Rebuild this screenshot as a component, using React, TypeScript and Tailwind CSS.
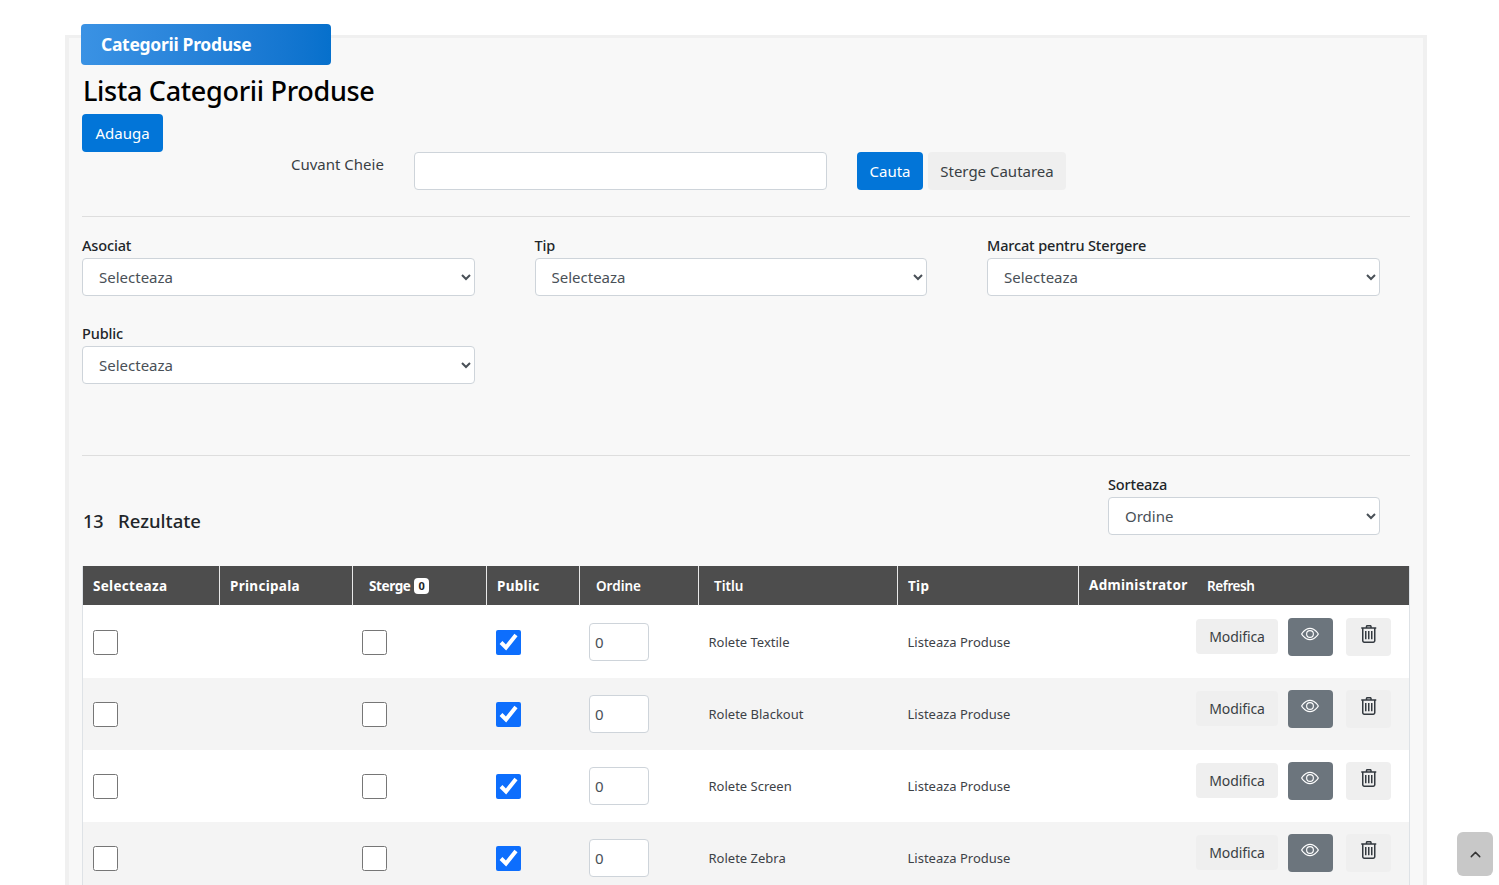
import { ChevronUp } from "lucide-react";
import { BsEye } from "react-icons/bs";
import { LiaTrashAlt } from "react-icons/lia";

const filters = ["Asociat", "Tip", "Marcat pentru Stergere", "Public"];

const rows = ["Rolete Textile", "Rolete Blackout", "Rolete Screen", "Rolete Zebra"];

const selectClass =
  "h-[38px] rounded border border-[#ced4da] bg-white pl-3 text-[15px] text-[#495057]";

const thClass = "border-r border-b border-r-[#e8e8e8] border-b-white pt-[2px]";

const Select = ({ value, width }: { value: string; width: string }) => (
  <select className={`${selectClass} ${width}`} defaultValue={value}>
    <option>{value}</option>
  </select>
);

export default function App() {
  return (
    <div className="relative h-[885px] overflow-hidden bg-white pt-[35px] pl-[65px] pr-[72px] font-['Noto_Sans',sans-serif] text-[#212529]">
      <div className="h-[900px] border-x-[4px] border-t-[3px] border-[#f0f0f0] bg-[#f8f8f8] px-[13px]">
        {/* TITLE TAB */}
        <div className="-mt-[14px] -ml-px flex h-[41px] w-[250px] items-center rounded bg-gradient-to-r from-[#3a92e4] to-[#0670cc] pl-5 text-[17.5px] font-bold tracking-[-0.3px] text-white">
          Categorii Produse
        </div>

        <h2 className="mt-[7px] h-[42px] pl-px text-[27px] leading-[38px] font-medium tracking-[-0.3px] text-black">
          Lista Categorii Produse
        </h2>

        <button className="block h-[38px] w-[81px] rounded bg-[#0275d8] text-[15px] text-white">
          Adauga
        </button>

        {/* SEARCH */}
        <div className="flex items-start pl-[209px]">
          <label className="w-[123px] text-[15px] leading-6 whitespace-nowrap text-[#3a3f44]">
            Cuvant Cheie
          </label>
          <input className="h-[38px] w-[413px] rounded border border-[#ced4da] bg-white" />
          <button className="ml-[30px] h-[38px] w-[66px] rounded bg-[#0275d8] text-[15px] text-white">
            Cauta
          </button>
          <button className="ml-[5px] h-[38px] w-[138px] rounded bg-[#efefef] text-[15px] text-[#3a3f44]">
            Sterge Cautarea
          </button>
        </div>

        <hr className="mt-[26px] border-[#dedede]" />

        {/* FILTERS */}
        <div className="mt-4 grid grid-cols-[452.5px_452.5px_1fr] gap-y-[25px]">
          {filters.map((label) => (
            <div key={label}>
              <div className="mb-px text-[14.5px] leading-6 font-medium tracking-[-0.15px]">
                {label}
              </div>
              <Select value="Selecteaza" width="w-[392.5px]" />
            </div>
          ))}
        </div>

        <hr className="mt-[71px] border-[#dedede]" />

        {/* RESULTS */}
        <div className="mt-4 flex items-end justify-between pr-[30px]">
          <div className="flex pb-[1px] text-[18.5px] leading-[26px] font-medium">
            <span className="w-[36px] pl-px text-[18px]">13</span>
            <span>Rezultate</span>
          </div>
          <div>
            <div className="mb-px text-[14.5px] leading-6 font-medium tracking-[-0.15px]">
              Sorteaza
            </div>
            <Select value="Ordine" width="w-[272px]" />
          </div>
        </div>

        {/* TABLE */}
        <table className="mt-[31px] w-[1328px] table-fixed border-separate border-spacing-0 border-x border-[#dee2e6] text-[13px]">
          <colgroup>
            <col className="w-[137px]" />
            <col className="w-[133px]" />
            <col className="w-[134px]" />
            <col className="w-[93px]" />
            <col className="w-[119px]" />
            <col className="w-[199px]" />
            <col className="w-[181px]" />
            <col />
          </colgroup>
          <thead>
            <tr className="h-[40px] bg-[#4d4d4d] text-left text-[13.5px] font-bold text-white">
              <th className={`${thClass} pl-2.5 tracking-[0.3px]`}>Selecteaza</th>
              <th className={`${thClass} pl-2.5 tracking-[0.3px]`}>Principala</th>
              <th className={`${thClass} pl-4`}>
                <span className="tracking-[-0.4px]">Sterge</span>
                <span className="ml-1 inline-block h-4 rounded bg-white px-[4px] align-[1px] text-[11px] leading-4 font-bold text-[#212529]">
                  0
                </span>
              </th>
              <th className={`${thClass} pl-2.5 tracking-[0.3px]`}>Public</th>
              <th className={`${thClass} pl-4 font-semibold`}>Ordine</th>
              <th className={`${thClass} pl-[15px] font-semibold`}>Titlu</th>
              <th className={`${thClass} pl-2.5 tracking-[0.3px]`}>Tip</th>
              <th className="border-b border-b-white pt-[2px] pl-2.5">
                <div className="flex items-center">
                  <span className="-mt-[3px] w-[118px] tracking-[0.3px]">Administrator</span>
                  <span className="font-semibold tracking-[-0.4px]">Refresh</span>
                </div>
              </th>
            </tr>
          </thead>
          <tbody>
            {rows.map((title, i) => (
              <tr key={title} className={i % 2 === 0 ? "h-[72px] bg-white" : "h-[72px] bg-[#f4f4f4]"}>
                <td className="pl-2.5">
                  <input type="checkbox" className="m-0 block size-[25px]" />
                </td>
                <td />
                <td className="pl-[9px]">
                  <input type="checkbox" className="m-0 block size-[25px]" />
                </td>
                <td className="pl-[9px]">
                  <input
                    type="checkbox"
                    defaultChecked
                    className="m-0 block size-[25px] accent-[#0d6efd]"
                  />
                </td>
                <td className="pl-[9px]">
                  <input
                    defaultValue="0"
                    className="h-[38px] w-[60px] rounded border border-[#ced4da] bg-white px-[5px] text-[15px] text-[#495057]"
                  />
                </td>
                <td className="pt-[2px] pl-[9.5px] text-[#3d4247]">{title}</td>
                <td className="pt-[2px] pl-[9.5px] text-[#3d4247]">Listeaza Produse</td>
                <td>
                  <div className="-mt-[11px] flex items-start">
                    <button className="mt-[1px] ml-[117px] h-[35px] w-[82px] shrink-0 rounded bg-[#efefef] text-[14px] tracking-[-0.1px] text-[#3a3f44]">
                      Modifica
                    </button>
                    <button className="ml-2.5 flex h-[38px] w-[45px] shrink-0 justify-center rounded bg-[#6c757d] pt-[7px] pr-[1px] text-white">
                      <BsEye className="size-[18px]" />
                    </button>
                    <button className="ml-[13px] flex h-[38px] w-[45px] shrink-0 justify-center rounded bg-[#efefef] pt-[4px] pr-[2px] text-[#343a40]">
                      <LiaTrashAlt className="size-[24px]" />
                    </button>
                  </div>
                </td>
              </tr>
            ))}
          </tbody>
        </table>
      </div>

      {/* SCROLL TOP */}
      <button className="absolute top-[832px] left-[1457px] flex h-[44px] w-[36px] items-center justify-center rounded-md bg-[#c8c8c8] text-[#333]">
        <ChevronUp className="size-[17px]" />
      </button>
    </div>
  );
}
